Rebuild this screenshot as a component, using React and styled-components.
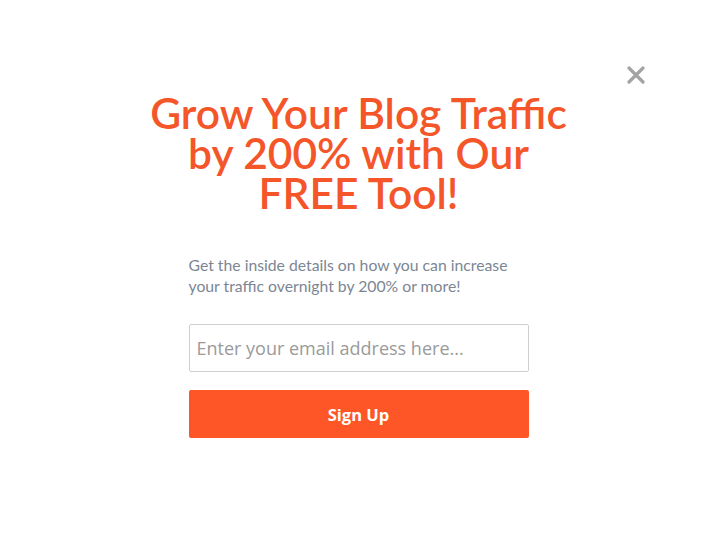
import React from "react";
import styled, { createGlobalStyle } from "styled-components";

const GlobalStyle = createGlobalStyle`
  html, body {
    margin: 0;
    padding: 0;
    background: #fff;
  }
  * {
    box-sizing: border-box;
  }
`;

const Page = styled.div`
  position: relative;
  width: 717px;
  height: 538px;
  background: #fff;
  display: flex;
  flex-direction: column;
  align-items: center;
  padding-top: 93px;
`;

const Close = styled.button`
  position: absolute;
  top: 66px;
  left: 627px;
  width: 18px;
  height: 18px;
  padding: 0;
  border: none;
  background: none;
  cursor: pointer;
  display: flex;
  align-items: center;
  justify-content: center;
`;

const Heading = styled.h1`
  margin: 0;
  font-family: Lato, "Open Sans", sans-serif;
  font-weight: 600;
  font-size: 42.5px;
  line-height: 40px;
  color: #f4562a;
  text-align: center;
`;

const Form = styled.div`
  width: 340px;
  margin-top: 41px;
  display: flex;
  flex-direction: column;
`;

const Lead = styled.p`
  margin: 0;
  font-family: Lato, sans-serif;
  font-size: 15.75px;
  line-height: 21px;
  color: #7c8693;
`;

const Email = styled.input`
  margin-top: 28px;
  height: 48px;
  width: 100%;
  border: 1px solid #cfcfcf;
  border-radius: 2px;
  padding: 0 7px;
  font-family: "Open Sans", sans-serif;
  font-size: 18px;
  color: #555;
  outline: none;
  &::placeholder {
    color: #9a9a9a;
  }
`;

const Submit = styled.button`
  margin-top: 18px;
  height: 48px;
  width: 100%;
  border: none;
  border-radius: 2px;
  background: #ff5627;
  color: #fff;
  font-family: "Open Sans", sans-serif;
  font-weight: 700;
  font-size: 16.5px;
  cursor: pointer;
`;

export default function App() {
  return (
    <>
      <GlobalStyle />
      <Page>
        <Close aria-label="Close">
          <svg width="18" height="18" viewBox="0 0 18 18">
            <path d="M2 2 L16 16 M16 2 L2 16" stroke="#a3a3a3" strokeWidth="3.2" strokeLinecap="round" />
          </svg>
        </Close>
        <Heading>
          Grow Your Blog Traffic
          <br />
          by 200% with Our
          <br />
          FREE Tool!
        </Heading>
        <Form>
          <Lead>
            Get the inside details on how you can increase
            <br />
            your traffic overnight by 200% or more!
          </Lead>
          <Email type="email" placeholder="Enter your email address here..." />
          <Submit>Sign Up</Submit>
        </Form>
      </Page>
    </>
  );
}
